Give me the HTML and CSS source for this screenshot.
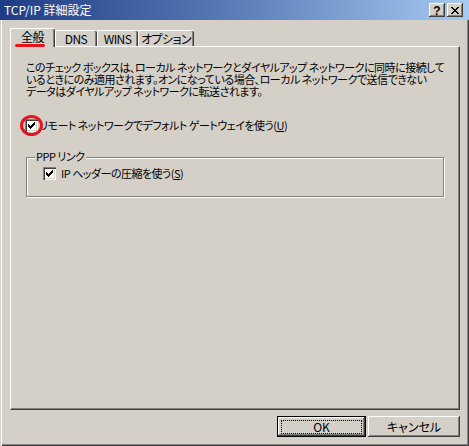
FILE: index.html
```html
<!DOCTYPE html>
<html lang="ja">
<head>
<meta charset="utf-8">
<title>TCP/IP 詳細設定</title>
<link rel="stylesheet" href="styles.css">
</head>
<body>
<div class="window">
  <div class="titlebar">
    <span class="title">TCP/IP 詳細設定</span>
    <div class="tb-buttons">
      <span class="tb-btn help">?</span>
      <span class="tb-btn close"><svg width="8" height="7" viewBox="0 0 8 7" shape-rendering="crispEdges"><path d="M0 0h2v1h-2z M1 1h2v1h-2z M2 2h4v1h-4z M3 3h2v1h-2z M2 4h4v1h-4z M1 5h2v1h-2z M0 6h2v1h-2z M6 0h2v1h-2z M5 1h2v1h-2z M5 5h2v1h-2z M6 6h2v1h-2z" fill="#000"/></svg></span>
    </div>
  </div>
  <div class="client">
    <div class="tabs">
      <div class="tab active">全般<span class="underline-mark"></span></div>
      <div class="tab w-dns">DNS</div>
      <div class="tab w-wins">WINS</div>
      <div class="tab w-opt">オプション</div>
    </div>
    <div class="panel">
      <p class="desc">このチェック ボックスは、ローカル ネットワークとダイヤルアップ ネットワークに同時に接続して<br>いるときにのみ適用されます。オンになっている場合、ローカル ネットワークで送信できない<br>データはダイヤルアップ ネットワークに転送されます。</p>
      <div class="check first">
        <span class="box"><svg width="13" height="13" viewBox="0 0 13 13" shape-rendering="crispEdges"><path d="M3 5h1v3H3z M4 6h1v3H4z M5 7h1v3H5z M6 6h1v3H6z M7 5h1v3H7z M8 4h1v3H8z M9 3h1v3H9z" fill="#000"/></svg></span>
        <span class="circle"></span>
        <span class="label">リモート ネットワークでデフォルト ゲートウェイを使う(<u>U</u>)</span>
      </div>
      <div class="group">
        <span class="legend">PPP リンク</span>
        <div class="check second">
          <span class="box"><svg width="13" height="13" viewBox="0 0 13 13" shape-rendering="crispEdges"><path d="M3 5h1v3H3z M4 6h1v3H4z M5 7h1v3H5z M6 6h1v3H6z M7 5h1v3H7z M8 4h1v3H8z M9 3h1v3H9z" fill="#000"/></svg></span>
          <span class="label">IP ヘッダーの圧縮を使う(<u>S</u>)</span>
        </div>
      </div>
    </div>
    <div class="buttons">
      <button class="btn default"><span class="focus">OK</span></button>
      <button class="btn cancel">キャンセル</button>
    </div>
  </div>
</div>
</body>
</html>
```
FILE: styles.css
```css
* { box-sizing: border-box; }
html, body { margin: 0; padding: 0; background: #d4d0c8; }
body {
  font-family: "Noto Sans CJK JP", "Noto Sans", sans-serif;
  font-size: 11px;
  line-height: 12px;
  letter-spacing: -0.5px;
  color: #000;
  font-feature-settings: "palt";
}
.window {
  width: 469px;
  height: 446px;
  display: flex;
  flex-direction: column;
  background: #d4d0c8;
}
.titlebar {
  height: 20px;
  flex: none;
  display: flex;
  align-items: center;
  justify-content: space-between;
  padding: 0 6px 0 4px;
  background: linear-gradient(to right, #1e3c84 0%, #5a7cb8 50%, #a6caf0 100%);
}
.title { color: #fff; font-size: 12px; letter-spacing: 0; }
.tb-buttons { display: flex; gap: 2px; }
.tb-btn {
  width: 16px;
  height: 14px;
  background: #d4d0c8;
  box-shadow: inset -1px -1px #404040, inset 1px 1px #fff, inset -2px -2px #808080;
  display: flex;
  align-items: center;
  justify-content: center;
}
.tb-btn.help {
  font-family: "Liberation Sans", sans-serif;
  font-weight: bold;
  font-size: 12px;
  line-height: 12px;
  letter-spacing: 0;
  padding-top: 1px;
}
.client {
  flex: 1;
  display: flex;
  flex-direction: column;
  padding: 8px 9px 0 10px;
  box-shadow: inset 1px 0 #d4d0c8, inset 2px 0 #fff, inset -1px -1px #404040, inset -2px -2px #808080;
}
.tabs {
  height: 18px;
  display: flex;
  align-items: flex-end;
  flex: none;
  font-size: 12px;
  letter-spacing: -0.6px;
}
.tab {
  height: 16px;
  display: flex;
  align-items: center;
  justify-content: center;
  padding: 1px 1px 0 0;
  background: #d4d0c8;
  border-top: 1px solid #fff;
  border-left: 1px solid #fff;
  box-shadow: inset -1px 0 #404040, inset -2px 0 #808080;
  border-radius: 2px 2px 0 0;
}
.tab.active {
  width: 45px;
  height: 19px;
  margin-bottom: -1px;
  position: relative;
  z-index: 1;
  padding: 0 1px 2px 0;
}
.w-dns { width: 42px; }
.w-wins { width: 41px; }
.w-opt { width: 56px; }
.underline-mark {
  position: absolute;
  left: 4px;
  top: 15px;
  width: 30px;
  height: 3px;
  border-radius: 2px;
  background: #e8141c;
}
.panel {
  height: 364px;
  flex: none;
  border-top: 1px solid #fff;
  border-left: 1px solid #fff;
  border-right: 1px solid #404040;
  border-bottom: 1px solid #404040;
  box-shadow: inset -1px -1px #808080;
  padding: 0 15px 0 15px;
}
.desc {
  margin: 14px 0 0 0;
  white-space: nowrap;
  line-height: 12px;
}
.check {
  display: flex;
  align-items: center;
  line-height: 13px;
  position: relative;
}
.check.first { margin: 22px 0 0 -1px; }
.check.first .label { margin-left: 1px; }
.check.second { margin-top: 5px; }
.check.second .label { margin-left: 5px; }
.box {
  width: 13px;
  height: 13px;
  flex: none;
  background: #fff;
  box-shadow: inset 1px 1px #808080, inset 2px 2px #404040, inset -1px -1px #fff, inset -2px -2px #d4d0c8;
}
.box svg { display: block; }
.circle {
  position: absolute;
  left: -5px;
  top: -4px;
  width: 23px;
  height: 21px;
  border: 3px solid #e8141c;
  border-radius: 50%;
}
u { text-decoration: underline; text-underline-offset: 1px; }
.group {
  margin-top: 25px;
  height: 40px;
  border: 1px solid #808080;
  box-shadow: 1px 1px 0 #fff, inset 1px 1px 0 #fff;
  padding: 0 0 0 16px;
}
.legend {
  display: block;
  width: max-content;
  margin: -8px 0 0 -8px;
  padding: 0 1px;
  background: #d4d0c8;
  line-height: 12px;
}
.buttons {
  display: flex;
  justify-content: flex-end;
  gap: 2px;
  margin-top: 6px;
}
.btn {
  height: 21px;
  font: inherit;
  font-size: 12px;
  line-height: 12px;
  letter-spacing: 0;
  background: #d4d0c8;
  color: #000;
  border: none;
  padding: 0;
  display: flex;
  align-items: center;
  justify-content: center;
}
.btn.default {
  width: 89px;
  border: 1px solid #000;
  box-shadow: inset -1px -1px #404040, inset 1px 1px #fff, inset -2px -2px #808080;
  padding: 3px;
}
.focus {
  flex: 1;
  align-self: stretch;
  display: flex;
  align-items: center;
  justify-content: center;
  outline: 1px dotted #000;
  outline-offset: 0;
  margin: 1px 1px 0 1px;
}
.btn.cancel {
  width: 92px;
  box-shadow: inset -1px -1px #404040, inset 1px 1px #fff, inset -2px -2px #808080;
}
```
